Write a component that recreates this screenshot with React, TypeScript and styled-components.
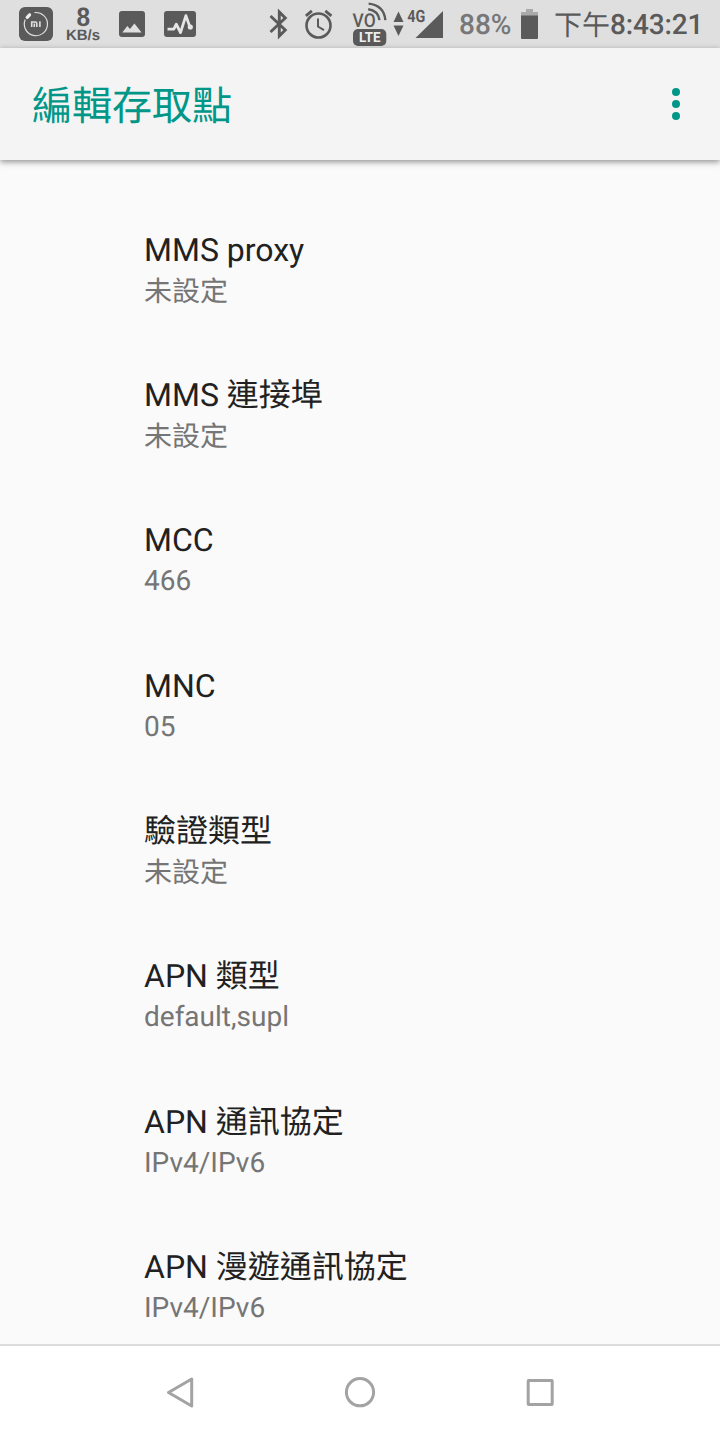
import React from "react";
import styled, { createGlobalStyle } from "styled-components";

const ink = "#5a5a5a";
const bg = "#dfdfdf";
const teal = "#009788";

const GlobalStyle = createGlobalStyle`
  *, *::before, *::after { box-sizing: border-box; }
  body {
    margin: 0;
    background: #fafafa;
    font-family: Roboto, "Noto Sans CJK TC", sans-serif;
    text-rendering: geometricPrecision;
  }
  svg { display: block; }
`;

const Screen = styled.div`
  width: 720px;
  height: 1440px;
  display: flex;
  flex-direction: column;
  overflow: hidden;
  background: #fafafa;
`;

const StatusBar = styled.header`
  flex: none;
  height: 48px;
  display: flex;
  justify-content: space-between;
  background: ${bg};
  color: ${ink};
`;

const StatusGroup = styled.div`
  display: flex;
  align-items: flex-start;
`;

const Slot = styled.div<{ $gap: number; $width: number }>`
  flex: none;
  width: ${(p) => p.$width}px;
  height: 48px;
  margin-left: ${(p) => p.$gap}px;
`;

const Speed = styled.div`
  width: 34px;
  height: 48px;
  margin-left: 13px;
  padding-top: 5px;
  display: flex;
  flex-direction: column;
  align-items: center;
  font-family: "Liberation Sans", sans-serif;
  font-weight: 700;
  white-space: nowrap;
`;

const SpeedValue = styled.span`
  height: 22px;
  font-size: 26.5px;
  line-height: 24px;
  transform: scaleX(0.92);
`;

const SpeedUnit = styled.span`
  font-size: 15px;
  line-height: 18px;
`;

const Percent = styled.span`
  width: 52px;
  margin-left: 16px;
  padding-top: 1.4px;
  color: #777;
  font-size: 28px;
  font-weight: 500;
  line-height: 48px;
  white-space: nowrap;
`;

const Clock = styled.span`
  width: 149px;
  margin-left: 16px;
  margin-right: 17px;
  padding-top: 1.4px;
  display: flex;
  font-size: 28px;
  line-height: 48px;
  white-space: nowrap;
`;

const Period = styled.span`
  padding-top: 1px;
  font-weight: 400;
`;

const Time = styled.span`
  font-weight: 500;
  letter-spacing: -0.15px;
`;

const AppBar = styled.div`
  flex: none;
  z-index: 1;
  height: 112px;
  padding: 0 36px 0 32px;
  display: flex;
  align-items: center;
  justify-content: space-between;
  background: #f4f4f4;
  box-shadow: 0 2px 6px rgba(0, 0, 0, 0.42);
`;

const Title = styled.h1`
  margin: 0;
  padding-top: 6px;
  color: ${teal};
  font-size: 40px;
  font-weight: 400;
  line-height: 106px;
`;

const MenuButton = styled.button`
  border: 0;
  padding: 0;
  background: none;
`;

const List = styled.ul`
  flex: 1;
  min-height: 0;
  margin: 0;
  padding: 36.6px 0 0 144px;
  list-style: none;
  overflow: hidden;
`;

const Row = styled.li`
  height: 145.33px;
  padding-top: 32px;
`;

const RowTitle = styled.div`
  height: 43.1px;
  color: #212121;
  font-size: 32px;
  line-height: 42px;
  white-space: nowrap;
`;

const RowValue = styled.div<{ $unset: boolean }>`
  padding-top: ${(p) => (p.$unset ? 1 : 0)}px;
  color: #757575;
  font-size: 28px;
  line-height: 38px;
  white-space: nowrap;
`;

const NavBar = styled.nav`
  flex: none;
  height: 96px;
  padding: 0 90px;
  display: grid;
  grid-template-columns: repeat(3, 180px);
  border-top: 2px solid #dcdcdc;
  background: #fff;
`;

const NavButton = styled.button`
  border: 0;
  padding: 0;
  background: none;
  display: flex;
  align-items: center;
  justify-content: center;
`;

const MiIcon = () => (
  <svg width="34" height="48" viewBox="19 0 34 48">
    <rect x="19" y="7" width="34" height="34" rx="6" fill={ink} />
    <path d="M34.5 12.6a11.6 11.6 0 1 1-9.3 7" fill="none" stroke={bg} strokeWidth="1.2" />
    <path d="M27.2 17.3l2.4-2.5" stroke="#eee" strokeWidth="3.2" strokeLinecap="round" />
    <path
      d="M31.7 27v-5h3.6q1.5 0 1.5 1.6V27M34.3 23.6V27M39.9 21.2V27"
      fill="none"
      stroke={bg}
      strokeWidth="1.6"
    />
  </svg>
);

const PictureIcon = () => (
  <svg width="26" height="48" viewBox="119 0 26 48">
    <rect x="119" y="11" width="26" height="26" rx="3" fill={ink} />
    <path d="M122.3 32.5l5-6.4 2.7 2.9 4.4-5.6 7.2 9.1z" fill={bg} />
  </svg>
);

const PulseIcon = () => (
  <svg width="32" height="48" viewBox="164 0 32 48">
    <rect x="164" y="11" width="32" height="26" rx="3" fill={ink} />
    <path
      d="M167.5 29.2h6.3l2.5-5 4.2 8.4 5.4-17 4 11.4"
      fill="none"
      stroke="#e6e6e6"
      strokeWidth="2.8"
      strokeLinejoin="round"
    />
    <circle cx="190.3" cy="27" r="2.6" fill="#e6e6e6" />
  </svg>
);

const BluetoothIcon = () => (
  <svg width="20" height="48" viewBox="269 0 20 48">
    <path
      d="M270.5 16l14.8 14-6 6V12l6 6-14.8 14"
      fill="none"
      stroke={ink}
      strokeWidth="2.9"
    />
  </svg>
);

const AlarmIcon = () => (
  <svg width="28" height="48" viewBox="305 0 28 48">
    <g fill="none" stroke={ink} strokeWidth="2.6">
      <circle cx="318.5" cy="25.5" r="12" />
      <path d="M318 18.5v8l6 3.6" strokeWidth="2" />
      <path d="M305.8 15.8l6.1-5M331.4 15.8l-6.1-5" strokeWidth="2.8" />
    </g>
  </svg>
);

const VolteIcon = () => (
  <svg width="35" height="48" viewBox="352 0 35 48">
    <text
      x="352.6"
      y="26.7"
      fontFamily="Roboto, sans-serif"
      fontSize="19"
      fontWeight="500"
      fill={ink}
      textLength="23"
      lengthAdjust="spacingAndGlyphs"
    >
      VO
    </text>
    <g fill="none" stroke={ink} strokeWidth="2.4">
      <path d="M368.2 9.2q10 1.3 11.3 11" />
      <path d="M368.6 3.6q15.4 1.6 16.8 16.6" />
    </g>
    <rect x="353" y="29" width="33.3" height="17" rx="5" fill={ink} />
    <text
      x="359"
      y="42.2"
      fontFamily="Roboto, sans-serif"
      fontSize="14"
      fontWeight="700"
      fill="#eee"
      textLength="21.5"
      lengthAdjust="spacingAndGlyphs"
    >
      LTE
    </text>
  </svg>
);

const SignalIcon = () => (
  <svg width="50" height="48" viewBox="393 0 50 48">
    <path d="M398.5 11.5l5 10.5h-10zM393.5 25.5h10l-5 10.5z" fill={ink} />
    <text
      x="407.3"
      y="22.4"
      fontFamily="Roboto, sans-serif"
      fontSize="17"
      fontWeight="700"
      fill={ink}
      textLength="18"
      lengthAdjust="spacingAndGlyphs"
    >
      4G
    </text>
    <path d="M443 11v27h-27.5z" fill={ink} />
  </svg>
);

const BatteryIcon = () => (
  <svg width="17" height="48" viewBox="521 0 17 48">
    <path d="M526 9h7v3h5v4h-17v-4h5z" fill="#aaa" />
    <path d="M521 15.5h17V38q0 1-1 1h-15q-1 0-1-1z" fill={ink} />
  </svg>
);

const UNSET = "未設定";

const rows = [
  { title: "MMS proxy", value: UNSET },
  { title: "MMS 連接埠", value: UNSET },
  { title: "MCC", value: "466" },
  { title: "MNC", value: "05" },
  { title: "驗證類型", value: UNSET },
  { title: "APN 類型", value: "default,supl" },
  { title: "APN 通訊協定", value: "IPv4/IPv6" },
  { title: "APN 漫遊通訊協定", value: "IPv4/IPv6" },
];

export default function App() {
  return (
    <Screen lang="zh-Hant">
      <GlobalStyle />
      <StatusBar>
        <StatusGroup>
          <Slot $gap={19} $width={34}><MiIcon /></Slot>
          <Speed>
            <SpeedValue>8</SpeedValue>
            <SpeedUnit>KB/s</SpeedUnit>
          </Speed>
          <Slot $gap={19} $width={26}><PictureIcon /></Slot>
          <Slot $gap={19} $width={32}><PulseIcon /></Slot>
        </StatusGroup>
        <StatusGroup>
          <Slot $gap={0} $width={20}><BluetoothIcon /></Slot>
          <Slot $gap={16} $width={28}><AlarmIcon /></Slot>
          <Slot $gap={19} $width={35}><VolteIcon /></Slot>
          <Slot $gap={6} $width={50}><SignalIcon /></Slot>
          <Percent>88%</Percent>
          <Slot $gap={10} $width={17}><BatteryIcon /></Slot>
          <Clock>
            <Period>下午</Period>
            <Time>8:43:21</Time>
          </Clock>
        </StatusGroup>
      </StatusBar>
      <AppBar>
        <Title>編輯存取點</Title>
        <MenuButton aria-label="更多選項">
          <svg width="16" height="40" viewBox="0 0 16 40" fill={teal}>
            <circle cx="8" cy="8" r="4" />
            <circle cx="8" cy="20" r="4" />
            <circle cx="8" cy="32" r="4" />
          </svg>
        </MenuButton>
      </AppBar>
      <List>
        {rows.map((row) => (
          <Row key={row.title}>
            <RowTitle>{row.title}</RowTitle>
            <RowValue $unset={row.value === UNSET}>{row.value}</RowValue>
          </Row>
        ))}
      </List>
      <NavBar>
        <NavButton aria-label="返回">
          <svg width="40" height="40" viewBox="0 0 40 40">
            <path d="M8.5 19.5l23.2-13.5v27z" fill="none" stroke="#a3a3a3" strokeWidth="3" strokeLinejoin="round" />
          </svg>
        </NavButton>
        <NavButton aria-label="主畫面">
          <svg width="40" height="40" viewBox="0 0 40 40">
            <circle cx="20" cy="19.2" r="13.6" fill="none" stroke="#a3a3a3" strokeWidth="3" />
          </svg>
        </NavButton>
        <NavButton aria-label="最近使用">
          <svg width="40" height="40" viewBox="0 0 40 40">
            <rect x="8.2" y="7.4" width="24" height="24" rx="0.5" fill="none" stroke="#a3a3a3" strokeWidth="3" />
          </svg>
        </NavButton>
      </NavBar>
    </Screen>
  );
}
